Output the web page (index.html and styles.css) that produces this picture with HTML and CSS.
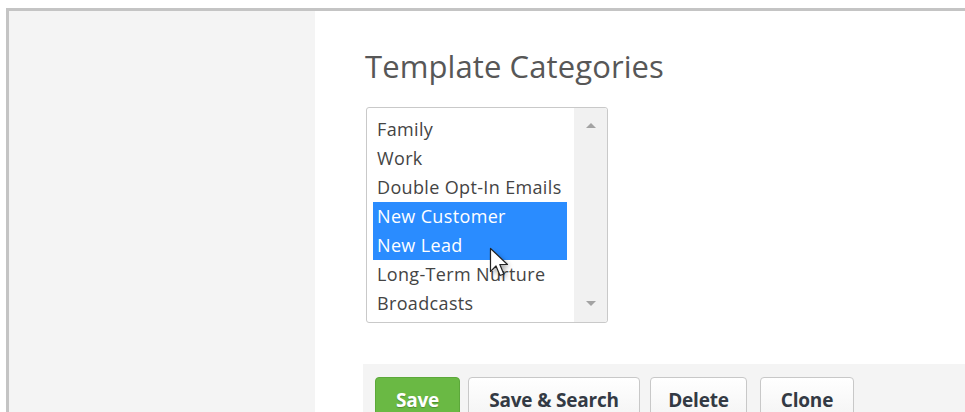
FILE: index.html
```html
<!DOCTYPE html>
<html lang="en">
<head>
<meta charset="utf-8">
<title>Template Categories</title>
<link rel="stylesheet" href="styles.css">
</head>
<body>
<div class="frame">
  <aside class="sidebar"></aside>
  <main class="content">
    <h1 class="title">Template Categories</h1>
    <div class="listbox">
      <ul class="options">
        <li class="option">Family</li>
        <li class="option">Work</li>
        <li class="option">Double Opt-In Emails</li>
        <li class="option selected">New Customer</li>
        <li class="option selected">New Lead</li>
        <li class="option">Long-Term Nurture</li>
        <li class="option">Broadcasts</li>
      </ul>
      <div class="scrollbar">
        <span class="arrow up"></span>
        <span class="arrow down"></span>
      </div>
      <svg class="cursor" width="28" height="36" viewBox="0 0 28 36">
        <defs>
          <filter id="shade" x="-50%" y="-50%" width="200%" height="200%">
            <feGaussianBlur stdDeviation="2.4"/>
          </filter>
        </defs>
        <path d="M4 4 L4 27 L9.5 22 L13.5 31 L17.5 29 L13.5 20 L21 20 Z" fill="#000" opacity="0.35" filter="url(#shade)"/>
        <path d="M1.5 1.5 L1.5 24.5 L7 19 L11 28.5 L14.8 27 L10.8 17.5 L18.5 17.5 Z" fill="#fff" stroke="#222" stroke-width="1.2" stroke-linejoin="round"/>
      </svg>
    </div>
    <div class="toolbar">
      <button class="btn primary">Save</button>
      <button class="btn btn-wide">Save &amp; Search</button>
      <button class="btn btn-delete">Delete</button>
      <button class="btn btn-clone">Clone</button>
    </div>
  </main>
</div>
</body>
</html>
```

FILE: styles.css
```css
html, body {
  margin: 0;
  padding: 0;
  height: 100%;
  overflow: hidden;
  background: #fff;
}

body {
  font-family: "Open Sans", "DejaVu Sans", sans-serif;
  color: #444;
}

.frame {
  display: flex;
  margin: 8px 0 0 6px;
  border-top: 3px solid #c4c4c4;
  border-left: 3px solid #c4c4c4;
  height: 420px;
}

.sidebar {
  width: 306px;
  flex: none;
  background: #f4f4f4;
}

.content {
  flex: 1;
  padding: 0 0 0 48px;
  display: flex;
  flex-direction: column;
}

.title {
  margin: 35px 0 0 2px;
  font-size: 31px;
  font-weight: 400;
  line-height: 40px;
  letter-spacing: 0.1px;
  color: #575757;
}

.listbox {
  position: relative;
  margin: 21px 0 0 3px;
  width: 240px;
  height: 214px;
  border: 1px solid #c9c9c9;
  border-radius: 3px;
  display: flex;
  background: #fff;
}

.options {
  list-style: none;
  margin: 0;
  padding: 7px 6px 0 6px;
  width: 194px;
}

.option {
  height: 29px;
  line-height: 29px;
  padding-left: 4px;
  font-size: 18px;
  letter-spacing: 0.35px;
  color: #444;
  white-space: nowrap;
}

.option.selected {
  background: #2a8cff;
  color: #fff;
}

.scrollbar {
  margin-left: auto;
  width: 33px;
  background: #f1f1f1;
  border-radius: 0 3px 3px 0;
  display: flex;
  flex-direction: column;
  justify-content: space-between;
  align-items: center;
  padding: 15px 0 16px;
  box-sizing: border-box;
}

.arrow {
  width: 0;
  height: 0;
  border-left: 5px solid transparent;
  border-right: 5px solid transparent;
}

.arrow.up {
  border-bottom: 5px solid #a3a3a3;
}

.arrow.down {
  border-top: 5px solid #a3a3a3;
}

.cursor {
  position: absolute;
  left: 122px;
  top: 139px;
}

.toolbar {
  margin: 41px 0 0 0;
  padding: 13px 0 0 12px;
  background: #f4f4f4;
  display: flex;
  gap: 8px;
  flex: 1;
  align-items: flex-start;
}

.btn {
  font-family: "Open Sans", "DejaVu Sans", sans-serif;
  font-size: 19px;
  font-weight: 700;
  color: #333a44;
  height: 46px;
  padding: 0;
  border: 1px solid #c8c8c8;
  border-radius: 4px;
  background: linear-gradient(#ffffff, #f3f3f3);
  letter-spacing: -0.2px;
}

.btn.primary {
  width: 85px;
  background: #6ab944;
  border-color: #5ca83a;
  color: #fff;
  text-shadow: 0 1px 1px rgba(0, 0, 0, 0.25);
}

.btn-wide {
  width: 172px;
}

.btn-delete {
  width: 97px;
  margin-left: 2px;
}

.btn-clone {
  width: 94px;
  margin-left: 5px;
}
```
